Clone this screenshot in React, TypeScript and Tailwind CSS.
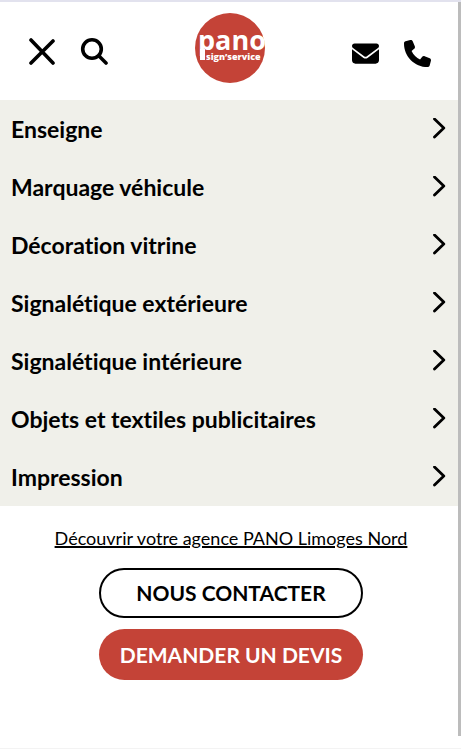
import React from 'react';
import { FaEnvelope, FaPhone } from 'react-icons/fa6';

const menuItems = [
  'Enseigne',
  'Marquage véhicule',
  'Décoration vitrine',
  'Signalétique extérieure',
  'Signalétique intérieure',
  'Objets et textiles publicitaires',
  'Impression',
];

const CloseIcon = () => (
  <svg
    viewBox="0 0 28 28"
    className="size-7"
    fill="none"
    stroke="currentColor"
    strokeWidth="3.6"
    strokeLinecap="round"
    aria-hidden="true"
  >
    <path d="M3 3 25 26M25 4 3 26" />
  </svg>
);

const SearchIcon = () => (
  <svg
    viewBox="0 0 28 28"
    className="size-7"
    fill="none"
    stroke="currentColor"
    strokeWidth="3.6"
    strokeLinecap="round"
    aria-hidden="true"
  >
    <circle cx="12" cy="12" r="9.3" />
    <path d="M19 19 26 26" />
  </svg>
);

const ChevronIcon = () => (
  <svg
    viewBox="0 0 14 22"
    className="h-[22px] w-3.5"
    fill="none"
    stroke="currentColor"
    strokeWidth="2.8"
    strokeLinecap="round"
    strokeLinejoin="round"
    aria-hidden="true"
  >
    <path d="M2.5 1 11.8 10 2.5 19" />
  </svg>
);

const Logo = () => (
  <svg viewBox="0 0 70 70" className="size-[70px]" role="img" aria-label="Pano Sign'Service">
    <circle cx="35" cy="35" r="35" fill="#c44337" />
    <g fill="#fff" fontFamily="'Open Sans', sans-serif">
      <text x="3" y="37" fontSize="27" fontWeight="700">
        pano
      </text>
      <path d="M5 36h5v11H5z" />
      <text x="11" y="47" fontSize="9" fontWeight="800">
        sign’service
      </text>
    </g>
  </svg>
);

const App: React.FC = () => {
  return (
    <div className="flex min-h-screen flex-col border-t-2 border-b border-t-[#e2e2ee] border-b-[#f3f3f3] bg-white pb-3 font-['Lato',sans-serif] text-black [font-variant-ligatures:none]">
      <div className="flex-1 border-r-[3px] border-[#bcbcbc]">
        <header className="grid h-[98px] grid-cols-[1fr_auto_1fr] items-center pr-[27px] pl-7">
          <div className="flex gap-6">
            <button type="button" aria-label="Fermer le menu">
              <CloseIcon />
            </button>
            <button type="button" aria-label="Rechercher">
              <SearchIcon />
            </button>
          </div>
          <a href="#accueil" className="mb-1.5">
            <Logo />
          </a>
          <div className="flex justify-end gap-[25px] pt-1">
            <a href="#email" aria-label="Nous écrire">
              <FaEnvelope className="size-[27px]" />
            </a>
            <a href="#telephone" aria-label="Nous appeler">
              <FaPhone className="size-[27px]" />
            </a>
          </div>
        </header>

        <nav className="bg-[#f0f0ea]">
          <ul>
            {menuItems.map((item) => (
              <li key={item}>
                <button
                  type="button"
                  className="flex h-[58px] w-full items-center justify-between pr-3 pl-[11px] text-left text-[23px] font-bold"
                >
                  {item}
                  <ChevronIcon />
                </button>
              </li>
            ))}
          </ul>
        </nav>

        <div className="flex flex-col items-center pt-[18px] pl-1">
          <a href="#agence" className="text-lg leading-7 underline decoration-2">
            Découvrir votre agence PANO Limoges Nord
          </a>
          <div className="mt-4 flex flex-col gap-[11px]">
            <button
              type="button"
              className="h-[50px] rounded-full border-2 border-black px-5 text-[21px] font-bold"
            >
              NOUS CONTACTER
            </button>
            <button
              type="button"
              className="h-[51px] rounded-full bg-[#c44337] px-[21px] text-[21px] font-bold text-white"
            >
              DEMANDER UN DEVIS
            </button>
          </div>
        </div>
      </div>
    </div>
  );
};

export default App;
